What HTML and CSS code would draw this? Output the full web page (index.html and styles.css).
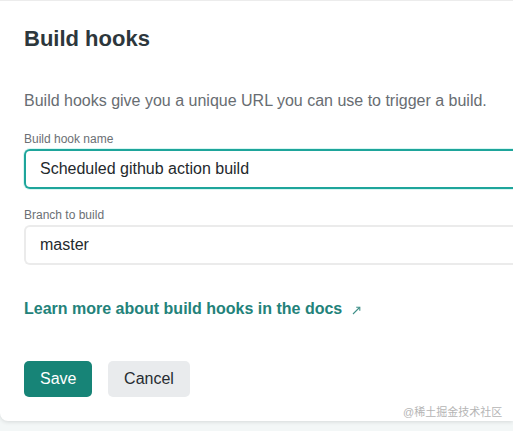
FILE: index.html
```html
<!DOCTYPE html>
<html>
<head>
<meta charset="utf-8">
<link rel="stylesheet" href="styles.css">
</head>
<body>
<div class="card">
  <h2 class="title">Build hooks</h2>
  <p class="desc">Build hooks give you a unique URL you can use to trigger a build.</p>
  <div class="field">
    <label class="label">Build hook name</label>
    <div class="input focused">Scheduled github action build</div>
  </div>
  <div class="field">
    <label class="label">Branch to build</label>
    <div class="input">master</div>
  </div>
  <a class="link">Learn more about build hooks in the docs <svg class="ext" width="9" height="9" viewBox="0 0 9 9"><path d="M1 8L7.5 1.5" stroke="#3f8f88" stroke-width="1.1" fill="none"/><path d="M4.2 1.2H7.8V4.8" stroke="#3f8f88" stroke-width="1.1" fill="none"/></svg></a>
  <div class="actions">
    <button class="btn primary">Save</button>
    <button class="btn secondary">Cancel</button>
  </div>
  <span class="watermark">@稀土掘金技术社区</span>
</div>
</body>
</html>
```
FILE: styles.css
```css
html, body {
  margin: 0;
  padding: 0;
}
body {
  background: #f3f7f7;
  overflow: hidden;
  width: 513px;
  height: 431px;
  font-family: "Liberation Sans", Arial, sans-serif;
}
.card {
  position: relative;
  box-sizing: border-box;
  width: 513px;
  height: 421px;
  background: #fff;
  border-top: 1px solid #ececec;
  border-radius: 0 0 0 8px;
  box-shadow: 0 1px 4px rgba(0, 0, 0, 0.12);
  padding: 24px 0 0 24px;
}
.title {
  margin: 0;
  font-size: 22px;
  line-height: 28px;
  font-weight: 700;
  color: #2d373c;
}
.desc {
  margin: 36px 0 0;
  font-size: 16px;
  line-height: 24px;
  color: #686d72;
}
.field {
  display: flex;
  flex-direction: column;
  gap: 2px;
  margin-top: 18px;
}
.label {
  font-size: 12px;
  line-height: 16px;
  color: #6b6f74;
}
.input {
  box-sizing: border-box;
  height: 40px;
  border: 2px solid #ebebeb;
  border-right: none;
  border-radius: 6px 0 0 6px;
  padding: 0 14px;
  display: flex;
  align-items: center;
  font-size: 16px;
  color: #24292d;
  background: #fff;
}
.input.focused {
  border-color: #1ea59b;
  box-shadow: 0 0 0 1px #d8f7f3;
}
.link {
  display: block;
  margin-top: 32px;
  font-size: 16px;
  line-height: 24px;
  font-weight: 700;
  color: #23827a;
}
.ext {
  margin-left: 5px;
  vertical-align: -1px;
}
.actions {
  display: flex;
  gap: 16px;
  margin-top: 40px;
}
.btn {
  height: 36px;
  border: none;
  border-radius: 5px;
  font-family: "Liberation Sans", Arial, sans-serif;
  font-size: 16px;
  padding: 0 16px;
}
.primary {
  background: #178477;
  color: #fff;
  width: 68px;
}
.secondary {
  background: #e9ebed;
  color: #262c31;
  width: 82px;
}
.watermark {
  position: absolute;
  left: 403px;
  top: 403px;
  font-size: 11px;
  line-height: 16px;
  color: #b5b5b5;
  font-family: "Liberation Sans", "Noto Sans CJK SC", sans-serif;
}
```
